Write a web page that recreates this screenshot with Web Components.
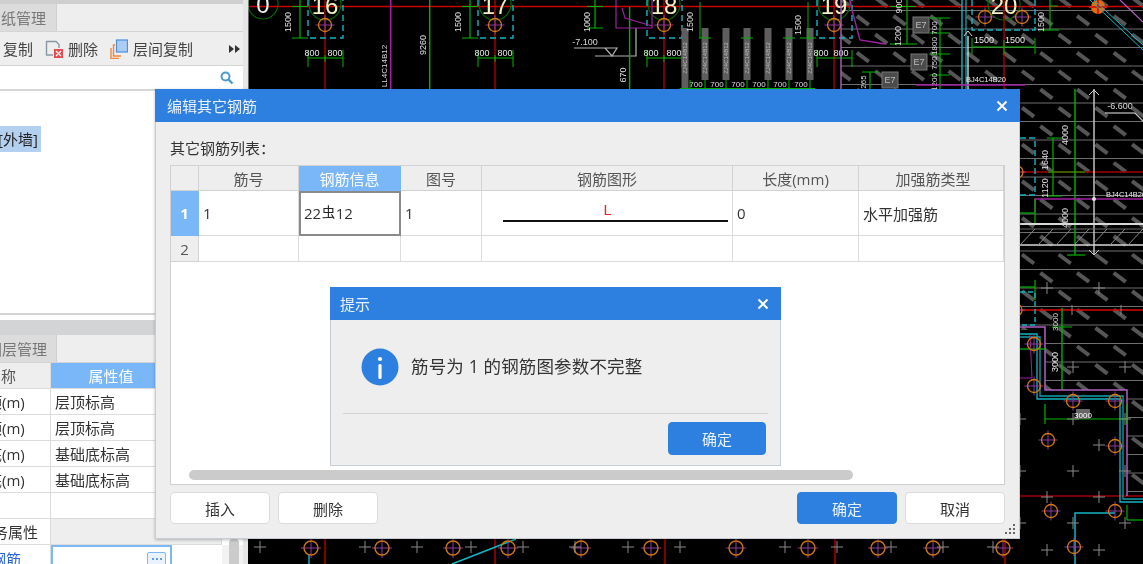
<!DOCTYPE html>
<html lang="zh-CN">
<head>
<meta charset="utf-8">
<title>编辑其它钢筋</title>
<style>
html,body{margin:0;padding:0;width:1143px;height:564px;overflow:hidden;background:#000}
body{font:15px "Open Sans","Noto Sans CJK SC",sans-serif;color:#333}
</style>
</head>
<body>
<template id="t-desktop">
<style>
:host{display:block;position:relative;width:1143px;height:564px;overflow:hidden;background:#000;filter:blur(.3px)}
::slotted(cad-canvas){position:absolute;left:248px;top:0}
::slotted(side-panel){position:absolute;left:0;top:0}
::slotted(rebar-dialog){position:absolute;left:155px;top:89px;width:865px;height:450px}
::slotted(alert-dialog){position:absolute;left:330px;top:287px;width:451px;height:179px}
</style>
<slot></slot>
</template>

<template id="t-window">
<style>
:host{display:flex;flex-direction:column;box-sizing:border-box;background:#eee;border:1px solid #c5ccd6;border-top:0;font:15px "Open Sans","Noto Sans CJK SC",sans-serif;color:#333;box-shadow:0 1px 3px rgba(0,0,0,.25)}
:host([small]){box-shadow:none}
.bar{flex:none;height:33px;background:#2d7fe0;color:#e9f2fd;display:flex;align-items:center;justify-content:space-between;padding:0 12px 0 12px;margin:0 -1px}
:host([small]) .bar{padding-left:10px}
.bar svg{display:block}
.body{flex:1;display:flex;flex-direction:column;min-height:0}
</style>
<div class="bar"><span class="title"></span><svg width="12" height="12" viewBox="0 0 12 12"><path d="M1.5 1.5l9 9M10.5 1.5l-9 9" stroke="#fff" stroke-width="2"/></svg></div>
<div class="body"><slot></slot></div>
</template>

<template id="t-btn">
<style>
:host{display:flex;align-items:center;justify-content:center;box-sizing:border-box;height:32px;width:100px;background:#fff;border:1px solid #dcdcdc;border-radius:4px;font-size:15px;color:#333}
:host([primary]){background:#2d7fe0;border-color:#2d7fe0;color:#e9f2fd}
</style>
<slot></slot>
</template>

<template id="t-grid">
<style>
:host{display:grid;grid-template-columns:28px 100px 102px 81px 251px 126px 1fr;grid-template-rows:25px 45px 26px;font-size:15px;color:#333}
</style>
<slot></slot>
</template>

<template id="t-cell">
<style>
:host{display:flex;align-items:center;box-sizing:border-box;background:#fff;border-right:1px solid #dcdcdc;border-bottom:1px solid #dcdcdc;padding:0 4px;white-space:nowrap;overflow:hidden;min-width:0}
:host([head]){background:#eee;justify-content:center;color:#555;border-right:1px solid #d2d2d2;border-bottom:1px solid #d2d2d2}
:host([hot]){background:#7ab7f8;color:#fff;justify-content:center;border-color:#7ab7f8}
:host([cur]){border:2px solid #8a8a8a;padding:0 3px 2px}
:host([mid]){padding:0}
:host([last]){padding-left:8px}
</style>
<slot></slot>
</template>

<template id="t-rebar">
<style>
:host{display:block}
.lbl{margin:16px 0 0 14px;height:20px;line-height:20px;color:#333}
.frame{box-sizing:border-box;margin:7px 14px 0 14px;height:320px;background:#fff;border:1px solid #cfcfcf;border-top:1px solid #d2d2d2;display:flex;flex-direction:column;justify-content:space-between}
.sb{height:10px;width:664px;margin:0 0 4px 18px;border-radius:5px;background:#cbcbcb}
.acts{display:flex;gap:8px;margin:7px 14px 0 14px}
.sp{flex:1}
.grip{position:absolute;right:3px;bottom:3px}
.draw{width:225px;height:100%;margin-left:21px;position:relative;flex:none}
.draw b{font:400 15px "Liberation Mono",monospace;color:#ee2222;position:absolute;top:12px;left:100px}
.draw i{position:absolute;left:0;right:0;top:29px;height:2px;background:#111}
.ph{font-size:13.5px;position:relative;top:-2px;margin:0 .5px;color:#222}
</style>
<div class="lbl">其它钢筋列表：</div>
<div class="frame">
  <rebar-grid>
    <grid-cell head></grid-cell><grid-cell head>筋号</grid-cell><grid-cell head hot>钢筋信息</grid-cell><grid-cell head>图号</grid-cell><grid-cell head>钢筋图形</grid-cell><grid-cell head>长度(mm)</grid-cell><grid-cell head last>加强筋类型</grid-cell>
    <grid-cell head hot><strong style="font-weight:700">1</strong></grid-cell><grid-cell>1</grid-cell><grid-cell cur>22<span class="ph">虫</span>12</grid-cell><grid-cell>1</grid-cell><grid-cell mid><div class="draw"><b>L</b><i></i></div></grid-cell><grid-cell>0</grid-cell><grid-cell>水平加强筋</grid-cell>
    <grid-cell head>2</grid-cell><grid-cell></grid-cell><grid-cell></grid-cell><grid-cell></grid-cell><grid-cell></grid-cell><grid-cell></grid-cell><grid-cell></grid-cell>
  </rebar-grid>
  <div class="sb"></div>
</div>
<div class="acts">
  <dlg-button>插入</dlg-button><dlg-button>删除</dlg-button><div class="sp"></div><dlg-button primary>确定</dlg-button><dlg-button>取消</dlg-button>
</div>
<svg class="grip" width="11" height="11" viewBox="0 0 11 11" fill="#666"><rect x="8" y="0" width="2" height="2"/><rect x="4" y="4" width="2" height="2"/><rect x="8" y="4" width="2" height="2"/><rect x="0" y="8" width="2" height="2"/><rect x="4" y="8" width="2" height="2"/><rect x="8" y="8" width="2" height="2"/></svg>
</template>

<template id="t-alert">
<style>
:host{display:block}
.msg{display:flex;align-items:center;gap:12px;height:93px;padding-left:30px;box-sizing:border-box;color:#333;font-size:17.5px}
.msg svg{flex:none}
.msg span{margin-top:-2px;letter-spacing:.15px}
.sep{height:1px;background:#cfd2d6;margin:0 12px}
.acts{display:flex;justify-content:flex-end;padding:8px 14px 0 0}
dlg-button{width:98px;height:33px}
</style>
<div class="msg"><svg width="38" height="38" viewBox="0 0 38 38"><circle cx="19" cy="19" r="18.5" fill="#2d7fe0"/><circle cx="19" cy="11" r="2.1" fill="#fff"/><rect x="17.4" y="16" width="3.2" height="15" rx="1.5" fill="#fff"/></svg><span>筋号为 1 的钢筋图参数不完整</span></div>
<div class="sep"></div>
<div class="acts"><dlg-button primary>确定</dlg-button></div>
</template>

<template id="t-panel">
<style>
:host{display:flex;flex-direction:column;width:248px;height:564px;background:#e6e6e6;overflow:hidden;font:15px "Open Sans","Noto Sans CJK SC",sans-serif;color:#333}
.wrap{width:243px;background:#eee;display:flex;flex-direction:column;height:100%}
.top{height:4px;background:#cfcfcf;flex:none}
.tabs{height:27px;flex:none;border-bottom:1px solid #d4d4d4;display:flex}
.tab{width:57px;background:#dcdcdc;border-right:1px solid #cfcfcf;box-sizing:border-box;color:#777;overflow:hidden;white-space:nowrap;line-height:28px;font-size:15px}
.tab span{display:inline-block}
.tools{height:33px;flex:none;display:flex;align-items:center;border-bottom:1px solid #d4d4d4;padding-left:3px;color:#444}
.tools svg{display:block;flex:none}
.search{height:23px;flex:none;background:#fff;border-bottom:2px solid #d6d6d6;display:flex;justify-content:flex-end;align-items:center;padding-right:9px}
.list{height:224px;flex:none;background:#fff;border-bottom:2px solid #d4d4d4;box-sizing:border-box;padding-top:35px}
.sel{width:41px;height:26px;background:#b4d0f0;line-height:26px;overflow:hidden;white-space:nowrap;color:#222}
.sel span{display:inline-block;margin-left:-2px}
.gap{height:5px;background:#fff;flex:none}
.band{height:15px;background:#d2d4d6;flex:none}
.tabs2{height:28px;flex:none;display:flex;border-bottom:1px solid #d4d4d4;box-sizing:border-box}
.props{flex:1;display:grid;grid-template-columns:51px 171px 1fr;grid-auto-rows:26px;align-content:start;background:#fff}
.c{box-sizing:border-box;border-right:1px solid #dcdcdc;border-bottom:1px solid #dcdcdc;display:flex;align-items:center;white-space:nowrap;overflow:hidden;padding-left:4px;color:#333}
.c.z{padding-left:0}
.c.z span{margin-left:-13px}
.h{background:#eee;color:#555}
.hot{background:#7ab7f8;color:#fff;justify-content:center;padding:0 50px 0 0}
.e{background:#eee}
.cur{border:2px solid #7ab7f8;border-bottom:0;justify-content:flex-end;padding:0 4px 0 0;width:121px;align-items:flex-start}
.dots{width:19px;height:14px;margin-top:5px;border:1px solid #7ab7f8;border-radius:2px;box-sizing:border-box;display:flex;gap:2px;align-items:center;justify-content:center;background:#eaf3fd}
.dots i{width:2px;height:2px;background:#3b7fd4;border-radius:50%}
.link{color:#2a66e0}
.sbv{position:relative;background:#f2f2f2}
.sbv i{position:absolute;left:7px;top:-7px;width:10px;height:50px;border-radius:5px;background:#cbcbcb}
.f{background:#fff}
</style>
<div class="wrap">
  <div class="top"></div>
  <div class="tabs"><div class="tab"><span style="margin-left:-14px">图纸管理</span></div></div>
  <div class="tools">
    <span>复制</span>
    <svg style="margin-left:12px" width="18" height="18" viewBox="0 0 18 18"><path d="M1 1.5h10l3 3V8" fill="none" stroke="#8a98a6" stroke-width="1.4"/><path d="M1.5 1.5V15H8" fill="none" stroke="#8a98a6" stroke-width="1.4"/><rect x="9" y="9" width="9" height="9" fill="#e8484e"/><path d="M11 11l5 5M16 11l-5 5" stroke="#fff" stroke-width="1.3"/></svg>
    <span style="margin:0 0 0 5px">删除</span>
    <svg style="margin-left:12px" width="18" height="20" viewBox="0 0 18 20"><path d="M5 6H3.5v11H11M1 9v10.5h8" fill="none" stroke="#f0883c" stroke-width="1.4"/><rect x="6.5" y="1" width="11" height="12" fill="#a9cdf5" stroke="#4d8fe0" stroke-width="1.2"/></svg>
    <span style="margin:0 0 0 5px">层间复制</span>
    <svg style="margin-left:36px" width="12" height="8" viewBox="0 0 12 8" fill="#333"><path d="M0 0l5 4-5 4zM6 0l5 4-5 4z"/></svg>
  </div>
  <div class="search"><svg width="14" height="14" viewBox="0 0 14 14"><circle cx="5.5" cy="5.5" r="4" fill="none" stroke="#4a9bd0" stroke-width="2"/><path d="M8.5 8.5l4 4" stroke="#4a9bd0" stroke-width="2.4"/></svg></div>
  <div class="list"><div class="sel"><span>[外墙]</span></div></div>
  <div class="gap"></div>
  <div class="band"></div>
  <div class="tabs2"><div class="tab" style="line-height:28px"><span style="margin-left:-13px">图层管理</span></div></div>
  <div class="props">
    <div class="c h" style="padding-left:1px">称</div><div class="c h hot">属性值</div><div class="f"></div>
    <div class="c z"><span>顶(m)</span></div><div class="c">层顶标高</div><div class="f"></div>
    <div class="c z"><span>顶(m)</span></div><div class="c">层顶标高</div><div class="f"></div>
    <div class="c z"><span>底(m)</span></div><div class="c">基础底标高</div><div class="f"></div>
    <div class="c z"><span>底(m)</span></div><div class="c">基础底标高</div><div class="f"></div>
    <div class="c"></div><div class="c"></div><div class="f"></div>
    <div class="c z"><span style="margin-left:-7px">务属性</span></div><div class="c e"></div><div class="f"></div>
    <div class="c z link" style="border-bottom:0"><span style="margin-left:-9px">钢筋</span></div><div class="c cur"><div class="dots"><i></i><i></i><i></i></div></div><div class="sbv"><i></i></div>
  </div>
</div>
</template>

<script>
function mount(host,id){
  const r=host.attachShadow({mode:'open'});
  r.appendChild(document.getElementById(id).content.cloneNode(true));
  return r;
}
class AppDesktop extends HTMLElement{constructor(){super();mount(this,'t-desktop')}}
class DlgButton extends HTMLElement{constructor(){super();mount(this,'t-btn')}}
class RebarGrid extends HTMLElement{constructor(){super();mount(this,'t-grid')}}
class GridCell extends HTMLElement{constructor(){super();mount(this,'t-cell')}}
class SidePanel extends HTMLElement{constructor(){super();mount(this,'t-panel')}}
class AppWindow extends HTMLElement{
  constructor(){super();mount(this,'t-window')}
  connectedCallback(){this.shadowRoot.querySelector('.title').textContent=this.getAttribute('title-text')||''}
}
class RebarDialog extends AppWindow{}
class AlertDialog extends AppWindow{}
class RebarBody extends HTMLElement{constructor(){super();mount(this,'t-rebar')}}
class AlertBody extends HTMLElement{constructor(){super();mount(this,'t-alert')}}
class CadCanvas extends HTMLElement{
  constructor(){
    super();
    const r=this.attachShadow({mode:'open'});
    const o=[];
    const L=(x1,y1,x2,y2,c,w=1,extra='')=>o.push(`<line x1="${x1}" y1="${y1}" x2="${x2}" y2="${y2}" stroke="${c}" stroke-width="${w}" ${extra}/>`);
    const P=(pts,c,w=1,extra='')=>o.push(`<polyline points="${pts}" fill="none" stroke="${c}" stroke-width="${w}" ${extra}/>`);
    const T=(x,y,s,c='#e8e8e8',fs=9,rot=false)=>o.push(`<text x="${x}" y="${y}" fill="${c}" font-size="${fs}" font-family="Liberation Sans,sans-serif" text-anchor="middle" ${rot?`transform="rotate(-90 ${x} ${y})"`:''}>${s}</text>`);
    const RED='#c80000',GRN='#00b400',CY='#14b4c4',PU='#a020a0',LP='#b060c0',OR='#d87810';
    const col=(x,y,r=6.5)=>{
      L(x-r-3,y,x+r+3,y,'#8a3aa0');L(x,y-r-3,x,y+r+3,'#8a3aa0');
      o.push(`<circle cx="${x}" cy="${y}" r="${r}" fill="none" stroke="${OR}" stroke-width="1.3"/>`);
    };
    const cross=(x,y)=>{L(x-6,y,x+6,y,'#8a8a8a');L(x,y-6,x,y+6,'#8a8a8a')};
    /* hatch */
    o.push('<clipPath id="h"><path d="M841 0H1143V496H1127V390H1045V330H1020V89H841Z"/></clipPath><g clip-path="url(#h)">');
    for(let y=10.5;y<500;y+=18.5)L(841,y,1143,y,'#6e6e6e',1.2);
    for(let i=-8;i<30;i++)for(let j=-7;j<5;j++){
      const x=1028+36.7*j+18.35*(i%2?1:0), y=111.7+18.35*i;
      o.push(`<line x1="${x-6}" y1="${y-4}" x2="${x+6}" y2="${y+5}" stroke="#565656" stroke-width="4"/>`);
    }
    o.push('</g>');
    /* main grid */
    L(248,6.5,1143,6.5,RED,1.6);
    L(1020,172,1143,172,'#a00000',1.6);
    L(1020,310,1143,310,'#e00000',1.4);
    L(1020,496,1143,496,'#f00000',1.2);
    /* axes */
    [[325,'16'],[495,'17'],[664,'18'],[834,'19'],[1004,'20']].forEach(([x,s])=>{
      o.push(`<circle cx="${x}" cy="4" r="16" fill="none" stroke="#006a00" stroke-width="1.2"/>`);
      L(x,0,x,89,RED,1.2);
      T(x,14,s,'#f2f2c0',24);
      if(x!==1004){
        col(x,25,6.5);
        P(`${x-17},0 ${x-17},38 ${x+18},38 ${x+18},0`,CY,1.4,'stroke-dasharray="6 4"');
        if(x<800){
          L(x-17,58,x+18,58,GRN,1.2);L(x-17,50,x-17,67,GRN);L(x+18,50,x+18,67,GRN);L(x,55,x,62,GRN);
          T(x-13,56,'800','#e8e8e8',9);T(x+10,56,'800','#e8e8e8',9);
        }
      }
    });
    /* axis 0 */
    o.push(`<circle cx="263" cy="4" r="15" fill="none" stroke="#006a00" stroke-width="1.2"/>`);
    T(263,13,'0','#f0f0f0',24);
    L(248,0,248,89,'#cfcfcf',1);
    /* left dims */
    [300,470].forEach(x=>{L(x,0,x,38,GRN,1.2);L(x-8,6.5,x+8,6.5,GRN,1);L(x-8,38,x+8,38,GRN,1);T(x-9,22,'1500','#e0e0e0',9,true)});
    L(390.7,0,390.7,89,PU,1.6);T(387,66,'LL4C14B12','#d8d8d8',8,true);
    L(429.7,0,429.7,89,GRN,1.4);T(426,45,'9260','#e0e0e0',9,true);
    /* -7.100 */
    T(585,45,'-7.100','#d8d8d8',9);
    P('574,48 617,48 612,56 605,48','#b4b4b4',1.2);
    P('595,56 636,56 636,28','#b4b4b4',1.2);
    L(629.6,7,629.6,89,GRN,1.4);T(626,75,'670','#e0e0e0',9,true);
    P('616,0 616,28 652,28 652,0',PU,1.2);P('622,8 625,18 652,26',PU,1.2);
    L(595,0,595,28,GRN,1.2);L(587,6.5,603,6.5,GRN);L(587,28,603,28,GRN);T(590,22,'1000','#e0e0e0',9,true);
    /* rebar bars */
    [685,705,726,747,768,789,810].forEach(x=>{
      o.push(`<rect x="${x-3.5}" y="28" width="7" height="${x===685?60:52}" fill="#5e5e5e"/>`);
      T(x+2,58,'ZJ4C14B12','#bbb',6,true);
    });
    [705,747,789].forEach(x=>{L(x-6,38,x+6,38,GRN,1)});
    L(700,2,700,38,GRN,1);T(693,22,'1500','#ddd',9,true);
    L(808,2,808,38,GRN,1);L(800,38,816,38,GRN);T(801,25,'1500','#ddd',9,true);
    L(680,88.5,815,88.5,GRN,1.2);
    [696,717,738,759,780,801].forEach(x=>{T(x,87,'700','#ddd',8)});
    [690,705,726,747,768,789,810].forEach(x=>L(x,80,x,89,GRN,1));
    /* axis 19 dims */
    L(817,58,852,58,GRN,1.2);L(817,50,817,67,GRN);L(852,50,852,67,GRN);T(821,56,'800','#e8e8e8',9);T(841,56,'800','#e8e8e8',9);
    /* right upper area */
    L(841,0,841,89,LP,1.4);
    P('850,0 852,10 860,40 885,44',PU,1.4);
    P('890,44 917,44','#00a000',1.2);L(907,0,907,44,GRN,1.2);L(890,6.5,916,6.5,GRN);T(901,36,'1200','#ddd',9,true);T(902,6,'900','#ddd',9,true);
    L(940,18,940,89,GRN,1.2);
    [18,33,54,75].forEach(y=>L(930,y,950,y,GRN,1));
    T(937,28,'700','#ddd',8,true);T(937,46,'1800','#ddd',8,true);T(937,63,'750','#ddd',8,true);T(937,82,'1200','#ddd',8,true);
    [[921,25],[919,62],[890,80]].forEach(([x,y])=>{o.push(`<rect x="${x-8}" y="${y-8}" width="16" height="16" fill="#4c4c4c" stroke="#777"/>`);T(x,y+3,'E7','#bbb',9)});
    L(870,72,870,89,GRN,1.2);L(862,72,878,72,GRN);T(866,82,'265','#ddd',8,true);
    L(962,0,962,89,CY,1.4);L(966,0,966,89,CY,1.2);
    P('972,0 972,30 1035,30 1035,0',CY,1.4,'stroke-dasharray="6 3"');
    col(985,17,6.5);col(1022,17,6.5);
    L(968,36,968,89,'#d8d8d8',1.4);P('964,36 968,31 972,36','#d8d8d8',1);
    L(972,47,1035,47,GRN,1.2);L(972,38,972,54,GRN);L(1035,38,1035,54,GRN);L(1004,40,1004,54,GRN);
    T(984,43,'1500','#eee',9);T(1015,43,'1500','#eee',9);
    L(1050,0,1050,30,GRN,1.2);L(1040,30,1059,30,GRN);L(1050,6,1058,6,GRN);T(1044,22,'1500','#ddd',9,true);
    T(986,82,'BJ4C14B20','#eee',7.5);
    L(916,85,1025,85,PU,1.6);
    o.push(`<circle cx="1098" cy="7" r="7" fill="#e86a10"/>`);L(1089,7,1107,7,'#d02000',2);L(1098,0,1098,14,'#d02000',2);
    L(1090,0,1143,50,CY,1);L(1094,0,1143,45,CY,1);L(1120,0,1143,22,LP,1.2);
    /* right column */
    L(1075,89,1075,255,GRN,1.4);L(1067,255,1085,255,GRN,1.2);
    L(1094,89,1094,255,'#cfcfcf',1.4);P('1089,95 1094,90 1099,95','#cfcfcf');P('1089,250 1094,255 1099,250','#cfcfcf');
    T(1068,135,'4000','#e0e0e0',9,true);T(1068,218,'4000','#e0e0e0',9,true);
    T(1120,109,'-6.600','#dedede',9);L(1105,113,1135,113,'#c8c8c8',1.2);P('1135,113 1143,121','#c8c8c8',1.2);
    L(1053,138,1053,196,GRN,1.2);L(1047,138,1062,138,GRN);L(1048,172,1085,172,GRN,1.2);L(1047,196,1062,196,GRN);
    T(1048,160,'1640','#e0e0e0',9,true);T(1048,188,'1120','#e0e0e0',9,true);
    P('1020,138 1035,138 1035,195 1020,195',CY,1.4,'stroke-dasharray="6 3"');
    col(1017,172,6);
    P('1035,212 1035,199 1143,199',PU,1.4);o.push('<circle cx="1094" cy="199" r="2" fill="#ddd"/>');
    T(1126,197,'BJ4C14B20','#f0f0f0',7.5);
    L(1020,213,1035,213,GRN,1.2);L(1035,199,1035,225,GRN,1.2);
    L(1020,224,1143,224,'#d8d8d8',2.2);L(1020,245,1143,245,'#d8d8d8',1.4);L(1020,229,1143,229,'#666',1);
    for(let x=1020;x<1143;x+=18)L(x,245,x+15,229,'#8a8a8a',1);
    /* lower right */
    L(1035,280,1035,300,GRN,1.2);L(1020,287,1035,287,GRN,1.2);
    P('1020,292 1035,292 1035,325 1020,325',CY,1.4,'stroke-dasharray="5 3"');
    cross(1047,288);cross(1099,288);col(1016,310,6);
    L(1062,308,1062,390,GRN,1.4);L(1052,327,1072,327,GRN);T(1058,322,'3000','#ddd',8,true);T(1058,362,'3000','#eee',9,true);
    L(1072,305,1072,315,'#888');L(1121,305,1121,315,'#888');
    P('1020,334 1037,334 1037,399 1120,399 1120,502 1143,502',CY,1.3);
    P('1020,337 1040,337 1040,396 1123,396 1123,499 1143,499','#10a0ac',1.3);
    P('1020,327 1045,327 1045,390 1127,390 1127,496',LP,1.5);
    L(1020,349,1045,349,GRN,1.3);
    P('1030,335 1032,378 1020,378',PU,1);
    L(1045,419,1128,419,GRN,1.2);L(1045,404,1045,424,GRN,1.2);L(1127,404,1127,424,GRN,1.2);
    o.push('<rect x="1076" y="409" width="14" height="10" fill="#666"/>');T(1083,418,'3000','#fff',8);
    L(1127,505,1127,520,GRN,1.2);L(1127,520,1143,520,GRN,1.2);
    P('1075,564 1075,513 1115,513',CY,1.5);
    [[1034,344],[1034,386],[1073,401],[1115,401],[1048,440],[1115,446],[1051,511],[1115,511],[1074,547]].forEach(([x,y])=>col(x,y));
    [[1020,419],[1073,419],[1099,445],[1073,471],[1125,471],[1020,471],[1047,497],[1099,497],[1020,523],[1073,523],[1125,523],[1047,550],[1099,550],[1125,419],[1125,367],[1073,367]].forEach(([x,y])=>cross(x,y));
    /* bottom strip */
    [325,495,665,835,1005].forEach(x=>L(x,539,x,564,'#d80000',1.2));
    L(309,555,309,564,CY,1.4);
    L(516,539,452,564,CY,1.6);
    [311,382,453,508,581,651,736,808,878,933,1003].forEach(x=>col(x,548,7));
    [260,365,417,471,523,575,628,680,785,837,891,943,993].forEach(x=>cross(x,547));
    r.innerHTML=`<style>:host{display:block;width:895px;height:564px;overflow:hidden;background:#000}svg{display:block;filter:blur(.45px)}</style><svg width="895" height="564" viewBox="248 0 895 564">${o.join('')}</svg>`;
  }
}
customElements.define('app-desktop',AppDesktop);
customElements.define('dlg-button',DlgButton);
customElements.define('grid-cell',GridCell);
customElements.define('rebar-grid',RebarGrid);
customElements.define('side-panel',SidePanel);
customElements.define('cad-canvas',CadCanvas);
customElements.define('rebar-body',RebarBody);
customElements.define('alert-body',AlertBody);
customElements.define('rebar-dialog',RebarDialog);
customElements.define('alert-dialog',AlertDialog);
</script>
<app-desktop>
  <cad-canvas></cad-canvas>
  <side-panel></side-panel>
  <rebar-dialog title-text="编辑其它钢筋"><rebar-body></rebar-body></rebar-dialog>
  <alert-dialog small title-text="提示"><alert-body></alert-body></alert-dialog>
</app-desktop>
</body>
</html>
